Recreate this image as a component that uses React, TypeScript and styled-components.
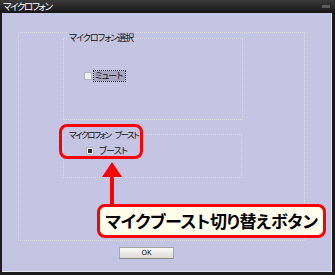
import React from 'react';
import styled, { createGlobalStyle } from 'styled-components';

const GlobalStyle = createGlobalStyle`
  html, body {
    margin: 0;
    padding: 0;
    background: #1c1c1c;
  }
  body {
    font-family: "Noto Sans CJK JP", "Noto Sans", sans-serif;
    font-feature-settings: "palt";
  }
`;

const LAVENDER = '#c4c4e3';

function App() {
  return (
    <>
      <GlobalStyle />
      <StyledWindow>
        <StyledTitleBar>
          <StyledTitle>マイクロフォン</StyledTitle>
          <StyledTitleGrip />
        </StyledTitleBar>
        <StyledClient>
          <StyledOuterFrame>
            <StyledGroup height={82} width={180}>
              <StyledLegend>マイクロフォン選択</StyledLegend>
              <StyledOption top={27} left={20}>
                <StyledCheckbox />
                <StyledFocusLabel>ミュート</StyledFocusLabel>
              </StyledOption>
            </StyledGroup>
            <StyledGroup height={44} width={179} gap={14}>
              <StyledLegend tight>
                マイクロフォン<StyledGap />ブースト
              </StyledLegend>
              <StyledOption top={6} left={22}>
                <StyledCheckbox checked />
                <StyledOptionLabel>ブースト</StyledOptionLabel>
              </StyledOption>
            </StyledGroup>
          </StyledOuterFrame>
          <StyledFooter>
            <StyledButton>OK</StyledButton>
          </StyledFooter>

          <StyledHighlight />
          <StyledArrow width="24" height="56" viewBox="0 0 24 56">
            <polygon points="12,0 2,15 22,15" fill="#ff0000" />
            <rect x="10" y="14" width="4" height="42" fill="#ff0000" />
          </StyledArrow>
          <StyledCallout>マイクブースト切り替えボタン</StyledCallout>
        </StyledClient>
      </StyledWindow>
    </>
  );
}

const StyledWindow = styled.div`
  position: relative;
  display: flex;
  flex-direction: column;
  box-sizing: border-box;
  width: 335px;
  height: 275px;
  padding: 0 3px 3px 2px;
  background: #1c1c1c;
`;

const StyledTitleBar = styled.div`
  display: flex;
  align-items: center;
  justify-content: space-between;
  height: 13px;
  margin: 0 -3px 0 -2px;
  padding: 0 5px 0 3px;
  background: linear-gradient(#3a3a3a, #161616);
`;

const StyledTitle = styled.span`
  color: #ffffff;
  font-size: 9.5px;
  line-height: 13px;
  letter-spacing: -1.4px;
`;

const StyledTitleGrip = styled.span`
  width: 8px;
  height: 3px;
  background: #5a5a5a;
`;

const StyledClient = styled.div`
  position: relative;
  flex: 1;
  background: ${LAVENDER};
  border-right: 1px solid #e6e6f2;
  border-bottom: 1px solid #e6e6f2;
`;

const StyledOuterFrame = styled.div`
  box-sizing: border-box;
  width: 287px;
  height: 209px;
  margin: 19px 0 0 16px;
  padding: 5px 0 0 44px;
  border: 1px dotted #d8d8e0;
`;

const StyledGroup = styled.div<{ height: number; width: number; gap?: number }>`
  position: relative;
  box-sizing: border-box;
  width: ${({ width }) => width}px;
  height: ${({ height }) => height}px;
  margin-top: ${({ gap }) => gap ?? 0}px;
  border: 1px dotted #d8d8e0;
`;

const StyledLegend = styled.div<{ tight?: boolean }>`
  width: fit-content;
  height: 12px;
  margin: -7px 0 0 4px;
  padding: 0 1px;
  background: ${LAVENDER};
  color: #101010;
  font-size: ${({ tight }) => (tight ? '8.5px' : '9px')};
  line-height: 12px;
  letter-spacing: ${({ tight }) => (tight ? '-1.5px' : '-1px')};
  white-space: nowrap;
`;

const StyledGap = styled.span`
  display: inline-block;
  width: 4px;
`;

const StyledOption = styled.div<{ top: number; left: number }>`
  display: flex;
  align-items: center;
  gap: 2px;
  margin: ${({ top }) => top}px 0 0 ${({ left }) => left}px;
  height: 10px;
`;

const StyledCheckbox = styled.span<{ checked?: boolean }>`
  position: relative;
  box-sizing: border-box;
  width: 8px;
  height: 8px;
  background: #f2f2f4;
  border: 1px solid #b4b4c0;
  &::after {
    content: '';
    position: absolute;
    inset: 1px;
    background: ${({ checked }) => (checked ? '#2a2a2a' : 'transparent')};
  }
`;

const StyledOptionLabel = styled.span`
  margin-left: 3px;
  color: #101010;
  font-size: 9px;
  line-height: 10px;
  letter-spacing: -0.8px;
  white-space: nowrap;
`;

const StyledFocusLabel = styled(StyledOptionLabel)`
  margin-left: 0;
  padding: 0 2px 0 1px;
  background: #a6a6c2;
  outline: 1px dotted #202020;
`;

const StyledFooter = styled.div`
  display: flex;
  padding: 6px 0 0 117px;
`;

const StyledButton = styled.div`
  box-sizing: border-box;
  width: 55px;
  height: 12px;
  border: 1px solid #a8a8a0;
  border-bottom-color: #8c8c86;
  border-radius: 1px;
  background: linear-gradient(#fbfbf8, #dcdcd4);
  color: #202020;
  font-family: "DejaVu Sans", sans-serif;
  font-size: 7px;
  line-height: 10px;
  text-align: center;
`;

const StyledHighlight = styled.div`
  position: absolute;
  left: 57px;
  top: 111px;
  box-sizing: border-box;
  width: 84px;
  height: 35px;
  border: 3px solid #ff0000;
  border-radius: 8px;
`;

const StyledArrow = styled.svg`
  position: absolute;
  left: 98px;
  top: 149px;
`;

const StyledCallout = styled.div`
  position: absolute;
  left: 95px;
  top: 191px;
  box-sizing: border-box;
  width: 229px;
  height: 34px;
  border: 3px solid #ff0000;
  border-radius: 8px;
  background: #ffffec;
  color: #000000;
  font-size: 17px;
  font-weight: 700;
  line-height: 28px;
  text-align: center;
  letter-spacing: -0.4px;
  white-space: nowrap;
`;

export default App;
